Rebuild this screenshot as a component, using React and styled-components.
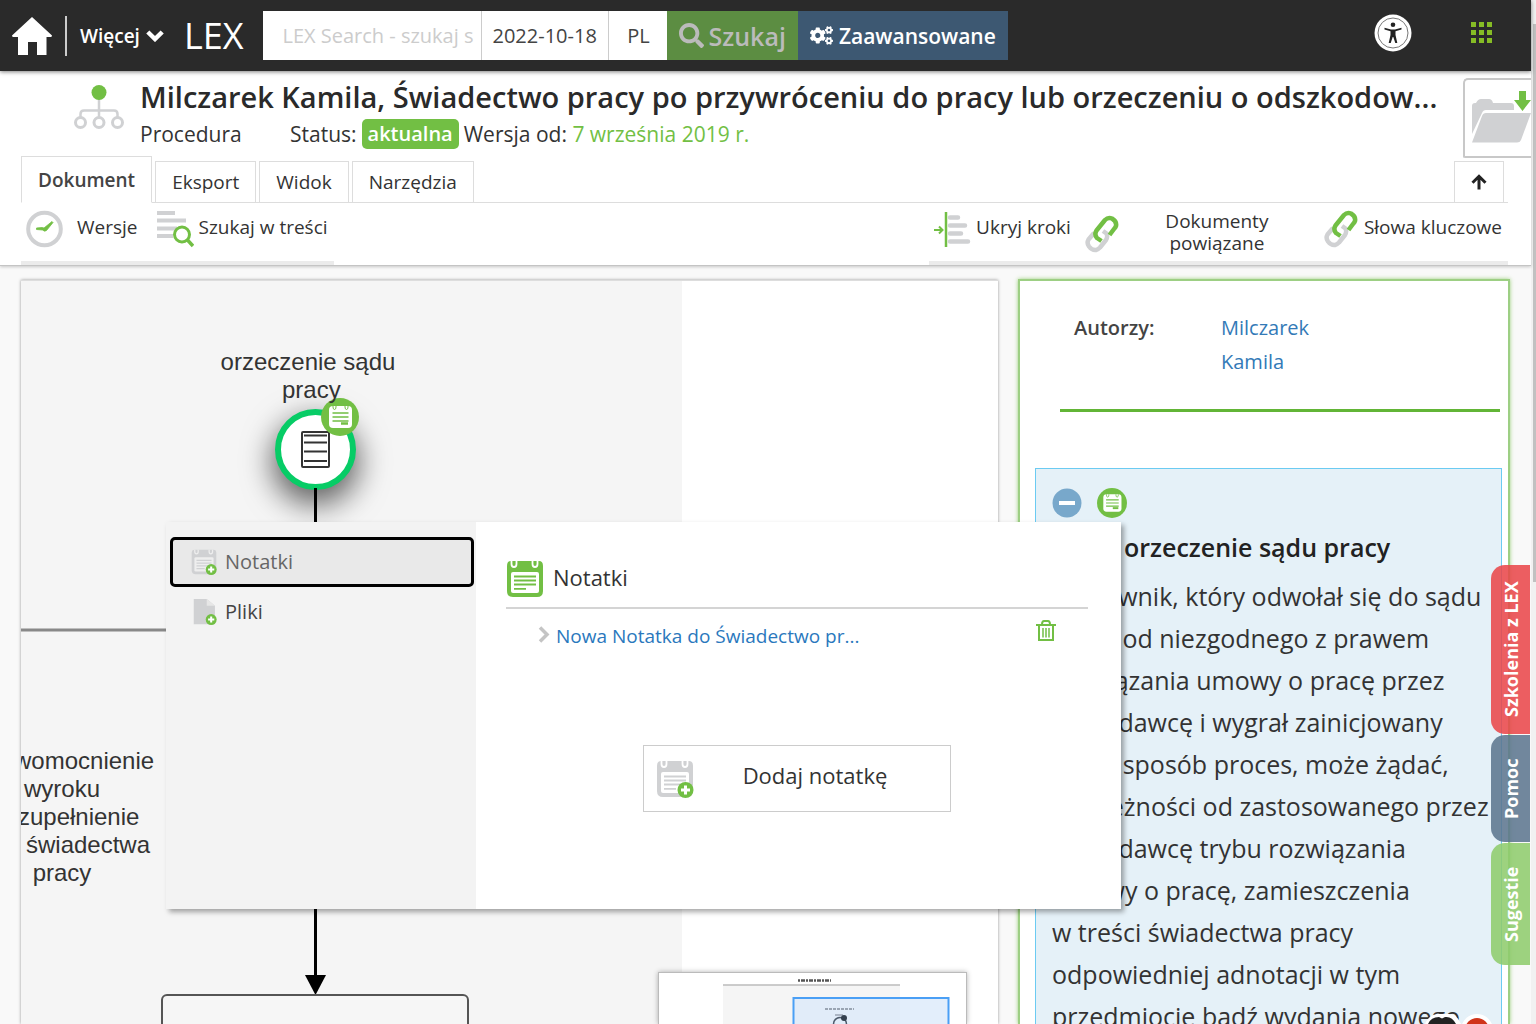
import React from "react";
import styled, { createGlobalStyle } from "styled-components";
import { FaSearch, FaCogs } from "react-icons/fa";

const GREEN = "#72bf44";
const GREY = "#d0d1d3";
const SANS = '"Open Sans", "Noto Sans", sans-serif';
const ARIAL = '"Liberation Sans", Arial, sans-serif';

const GlobalStyle = createGlobalStyle`
  *, *::before, *::after { box-sizing: border-box; }
  body { margin: 0; background: #f9f9f9; color: #333; font: 19px/24px ${SANS}; }
  button, input { font: inherit; color: inherit; }
  button { padding: 0; border: 0; background: none; cursor: pointer; }
  h1, h2, h3, p, ul, dl, dd { margin: 0; padding: 0; }
  ul { list-style: none; }
  a { color: #337ab7; text-decoration: none; }
  svg { display: block; flex: none; }
`;

/* ---------- page frame ---------- */

const Page = styled.div`
  display: flex;
  height: 100vh;
  overflow: hidden;
`;

const Content = styled.div`
  position: relative;
  display: flex;
  flex: 1;
  flex-direction: column;
  min-width: 0;
`;

const ScrollTrack = styled.div`
  flex: none;
  width: 5px;
  padding: 24px 0 0 2px;
  background: #f1f1f1;
`;

const ScrollThumb = styled.div`
  height: 558px;
  background: #c1c1c1;
`;

/* ---------- top bar ---------- */

const TopBar = styled.header`
  position: relative;
  z-index: 1;
  display: flex;
  flex: none;
  align-items: center;
  height: 71px;
  padding: 0 37px 0 12px;
  background: #2a2a2a;
  color: #fff;
  box-shadow: 0 1px 4px rgba(0, 0, 0, 0.5);
`;

const MoreButton = styled.button`
  display: flex;
  align-items: center;
  gap: 6px;
  height: 40px;
  margin-left: 13px;
  padding-left: 13px;
  border-left: 2px solid #ccc;
  font-size: 19px;
  font-weight: 600;
`;

const Brand = styled.a`
  margin: 0 20px;
  color: #fff;
  font-size: 36px;
  line-height: 48px;
`;

const SearchForm = styled.form`
  display: flex;
  height: 49px;
  background: #fff;
  color: #444;
`;

const SearchInput = styled.input`
  width: ${(p) => p.$width};
  padding: 0 0 0 ${(p) => p.$indent};
  border: 0;
  border-right: 1px solid #ccc;
  background: #fff;
  font-size: 20px;
  outline: 0;
  &::placeholder { color: #ccc; opacity: 1; }
`;

const LangButton = styled.button`
  width: 58px;
  font-size: 20px;
`;

const FormButton = styled.button`
  display: flex;
  align-items: center;
  justify-content: center;
  gap: ${(p) => (p.$primary ? "4px" : "6px")};
  padding: 0 12px;
  background: ${(p) => (p.$primary ? "#5c8d42" : "#3d5872")};
  color: ${(p) => (p.$primary ? "#bbb" : "#fff")};
  font-size: ${(p) => (p.$primary ? "25px" : "21px")};
  font-weight: 600;
`;

const TopActions = styled.div`
  display: flex;
  align-items: center;
  gap: 58px;
  margin: 0 0 6px auto;
`;

/* ---------- document header ---------- */

const DocHeader = styled.section`
  flex: none;
  background: #fff;
  border-bottom: 1px solid #c4c4c4;
  box-shadow: 0 1px 3px rgba(0, 0, 0, 0.2);
`;

const DocTop = styled.div`
  display: flex;
  height: 85px;
  padding-left: 74px;
`;

const DocIcon = styled.div`
  width: 66px;
  padding-top: 13px;
`;

const DocText = styled.div`
  flex: 1;
  min-width: 0;
  padding-top: 6px;
`;

const DocTitle = styled.h1`
  overflow: hidden;
  color: #2a2a2a;
  font-size: 29px;
  font-weight: 600;
  line-height: 40px;
  text-overflow: ellipsis;
  white-space: nowrap;
`;

const DocMeta = styled.div`
  display: flex;
  align-items: center;
  margin-top: 2px;
  font-size: 21px;
  line-height: 30px;
  white-space: pre;
`;

const DocType = styled.span`
  width: 150px;
`;

const StatusBadge = styled.span`
  margin: 0 5px;
  padding: 0 6px;
  border-radius: 5px;
  background: ${GREEN};
  color: #fff;
  font-size: 20px;
  font-weight: 600;
`;

const VersionDate = styled.span`
  color: ${GREEN};
`;

const FolderButton = styled.button`
  width: 68px;
  height: 80px;
  margin: 7px 0 0 10px;
  padding-left: 5px;
  border: 2px solid #c8c8c8;
  border-right: 0;
  border-radius: 5px 0 0 2px;
`;

const TabRow = styled.nav`
  display: flex;
  align-items: flex-end;
  gap: 3px;
  height: 47px;
  margin: 0 23px 0 21px;
  box-shadow: inset 0 -1px #ddd;
`;

const Tab = styled.button`
  height: ${(p) => (p.$active ? "47px" : "42px")};
  padding: 0 16px;
  border: 1px solid #ddd;
  border-bottom-color: ${(p) => (p.$active ? "#fff" : "#ddd")};
  background: #fff;
  font-size: 19px;
  font-weight: ${(p) => (p.$active ? 600 : 400)};
  color: ${(p) => (p.$active ? "#444" : "#333")};
`;

const CollapseTab = styled(Tab)`
  display: grid;
  place-items: center;
  width: 50px;
  margin: 0 4px 0 auto;
`;

const ToolRow = styled.div`
  display: flex;
  justify-content: space-between;
  margin: 0 23px 0 21px;
`;

const ToolGroup = styled.div`
  display: flex;
  align-items: flex-start;
  height: 62px;
  gap: ${(p) => p.$gap};
  padding: 7px 6px 0 5px;
  border-bottom: 4px solid #ebebeb;
`;

const Tool = styled.button`
  display: flex;
  align-items: center;
  gap: ${(p) => p.$gap};
  line-height: 22px;
`;

const ToolLabel = styled.span`
  width: ${(p) => (p.$narrow ? "167px" : "auto")};
  padding: ${(p) => (p.$narrow ? "0 37px 0 18px" : "0")};
  margin-bottom: 4px;
`;

/* ---------- work area ---------- */

const Main = styled.main`
  position: relative;
  display: grid;
  flex: 1;
  grid-template-columns: minmax(0, 1fr) 492px;
  gap: 20px;
  min-height: 0;
  padding: 14px 21px 0;
`;

const DiagramPanel = styled.section`
  position: relative;
  overflow: hidden;
  border-top: 1px solid #ddd;
  background: #fff;
  box-shadow: 0 0 3px rgba(0, 0, 0, 0.4);
`;

const Canvas = styled.div`
  position: relative;
  width: 661px;
  height: 100%;
  overflow: hidden;
  background: #f5f5f5;
`;

const NodeLabel = styled.p`
  position: absolute;
  left: ${(p) => p.$x}px;
  top: ${(p) => p.$y}px;
  width: 200px;
  color: #333;
  font: 24px/28px ${ARIAL};
  text-align: center;
  white-space: pre-line;
`;

const Wires = styled.svg`
  position: absolute;
  inset: 0;
`;

const StartNode = styled.div`
  position: absolute;
  left: 254px;
  top: 128px;
  display: grid;
  place-items: center;
  width: 81px;
  height: 81px;
  border: 6px solid #07cc66;
  border-radius: 50%;
  background: #fff;
  box-shadow: 0 12px 30px 3px rgba(0, 0, 0, 0.6);
`;

const NodeNote = styled.button`
  position: absolute;
  left: 300px;
  top: 117px;
`;

const StepNode = styled.div`
  position: absolute;
  left: 140px;
  top: 713px;
  width: 308px;
  height: 80px;
  border: 2px solid #555;
  border-radius: 6px;
  background: #f6f6f6;
`;

const MiniMap = styled.div`
  position: absolute;
  right: 31px;
  bottom: 0;
  width: 309px;
  height: 52px;
  border: 1px solid #bbb;
  border-bottom: 0;
  background: #fff;
  box-shadow: 0 0 5px rgba(0, 0, 0, 0.3);
`;

/* ---------- commentary panel ---------- */

const InfoPanel = styled.aside`
  overflow: hidden;
  margin-top: -1px;
  padding: 29px 6px 0 15px;
  border: 2px solid #9dcf84;
  border-bottom: 0;
  background: #fff;
  box-shadow: 0 0 4px rgba(114, 191, 68, 0.7);
`;

const Authors = styled.dl`
  display: grid;
  grid-template-columns: 147px 120px;
  height: 102px;
  margin: 0 2px 56px 25px;
  padding: 1px 14px 0;
  border-bottom: 3px solid #62b536;
  font-size: 20px;
  line-height: 34px;
`;

const AuthorsTerm = styled.dt`
  color: #444;
  font-weight: 600;
`;

const StepBox = styled.article`
  padding: 19px 0 0 16px;
  border: 1px solid #6bcbf2;
  background: #e5f1f8;
`;

const StepActions = styled.div`
  display: flex;
  gap: 15px;
`;

const StepTitle = styled.h2`
  padding: 12px 0 11px 72px;
  color: #222;
  font-size: 25px;
  font-weight: 600;
  line-height: 34px;
`;

const StepText = styled.p`
  font-size: 25px;
  line-height: 42px;
  white-space: pre;
`;

/* ---------- notes popup ---------- */

const Popup = styled.section`
  position: absolute;
  left: 166px;
  top: 256px;
  display: flex;
  width: 955px;
  height: 387px;
  background: #fff;
  box-shadow: 3px 3px 5px rgba(0, 0, 0, 0.35);
`;

const PopupMenu = styled.nav`
  width: 310px;
  padding: 15px 2px 0 4px;
  background: #f3f3f3;
`;

const MenuItem = styled.button`
  display: flex;
  align-items: center;
  gap: 8px;
  width: 100%;
  height: 50px;
  padding-left: 18px;
  border: 3px solid ${(p) => (p.$active ? "#000" : "transparent")};
  border-radius: 5px;
  background: ${(p) => (p.$active ? "#e9e9e9" : "none")};
  color: ${(p) => (p.$active ? "#666" : "#444")};
  font-size: 20px;
`;

const PopupBody = styled.div`
  display: flex;
  flex: 1;
  flex-direction: column;
  padding: 38px 33px 0 30px;
`;

const PopupHeading = styled.h3`
  display: flex;
  gap: 9px;
  height: 49px;
  border-bottom: 2px solid #d4d4d4;
  font-size: 22px;
  font-weight: 400;
  line-height: 34px;
`;

const NoteRow = styled.div`
  display: flex;
  align-items: flex-start;
  padding: 11px 32px;
`;

const NoteChevron = styled.span`
  padding-top: 6px;
`;

const NoteLink = styled.a`
  flex: 1;
  padding: 4px 0 0 6px;
  color: #2a78bd;
`;

const IconButton = styled.button`
  display: block;
`;

const AddNote = styled.button`
  display: flex;
  align-items: center;
  align-self: center;
  width: 308px;
  height: 67px;
  margin-top: 86px;
  padding-left: 12px;
  border: 1px solid #ccc;
  background: #fff;
  font-size: 22px;
`;

const AddNoteLabel = styled.span`
  flex: 1;
  padding: 0 14px 7px 0;
`;

/* ---------- side tabs ---------- */

const SideTabs = styled.nav`
  position: absolute;
  top: 565px;
  right: 1px;
  display: flex;
  flex-direction: column;
  gap: 1px;
`;

const SideTab = styled.button`
  width: 39px;
  height: ${(p) => p.$height};
  border-radius: 0 14px 14px 0;
  background: ${(p) => p.$color};
  color: #fff;
  font-size: 18px;
  font-weight: 700;
  writing-mode: vertical-rl;
  transform: rotate(180deg);
`;

const ChatBubble = styled.button`
  position: absolute;
  right: 36px;
  bottom: 0;
`;

/* ---------- drawings ---------- */

const HomeIcon = () => (
  <svg width="40" height="40" viewBox="0 0 40 40" fill="#fff">
    <path d="M20 1 40 19.500Q40 21 38.500 21H34.500V39H25V26H16V39H6V21H1.500Q0 21 0 19.500Z" />
  </svg>
);

const Chevron = ({ size, color, right }) => (
  <svg width={right ? 12 : size} height={right ? 17 : 12} viewBox={right ? "0 0 12 17" : "0 0 18 12"} fill="none" stroke={color} strokeWidth={right ? 3.5 : 4.5}>
    <path d={right ? "M2 1.500 9 8.500 2 15.500" : "M1.800 2 9 9 16.200 2"} />
  </svg>
);

const AccessibilityIcon = () => (
  <svg width="38" height="38" viewBox="0 0 38 38">
    <circle cx="19" cy="19" r="18.500" fill="#fff" />
    <circle cx="19" cy="19" r="15" fill="none" stroke="#777" strokeWidth="1" />
    <circle cx="19" cy="10.800" r="2.300" fill="#222" />
    <path d="M10.500 13.800 17 15.500H21L27.500 13.800V15.500L21.500 17.200V21L23.300 29H21.300L19.300 23H18.700L16.700 29H14.700L16.500 21V17.200L10.500 15.500Z" fill="#222" />
  </svg>
);

const GridIcon = () => (
  <svg width="24" height="24" viewBox="0 0 24 24" fill="#86bc25">
    {[1, 9, 17].map((y) => [1, 9, 17].map((x) => <rect key={`${x}-${y}`} x={x} y={y} width="5" height="5" />))}
  </svg>
);

const ProcedureIcon = () => (
  <svg width="50" height="46" viewBox="0 0 50 46" fill="none" stroke={GREY} strokeWidth="3">
    <path d="M25 14V33M6.500 33V30Q6.500 26.500 10 26.500H40Q43.500 26.500 43.500 30V33" strokeWidth="2.500" />
    <circle cx="6.500" cy="38.500" r="5" fill="#fff" />
    <circle cx="25" cy="38.500" r="5" fill="#fff" />
    <circle cx="43.500" cy="38.500" r="5" fill="#fff" />
    <circle cx="25" cy="8.500" r="7.500" fill={GREEN} stroke="none" />
  </svg>
);

const FolderIcon = () => (
  <svg width="62" height="64" viewBox="0 -10 62 64">
    <path d="M2 38V10Q2 7 5 7H6Q8 3 11 3H19Q22 3 23 7H41Q44 7 44 10V14H16Q13 14 12 17Z" fill={GREY} />
    <path d="M16 17H61L51 44Q50 46.500 47 46.500H2L12 20Q13 17 16 17Z" fill={GREY} />
    <path d="M49-5H56V4H61L52.500 15 44 4H49Z" fill={GREEN} />
  </svg>
);

const ArrowUp = () => (
  <svg width="16" height="16" viewBox="0 0 16 16" fill="none" stroke="#222" strokeWidth="3">
    <path d="M8 15.500V3M1.500 8.800 8 2.300 14.500 8.800" />
  </svg>
);

const ClockIcon = () => (
  <svg width="37" height="38" viewBox="0 0 37 38">
    <circle cx="18.500" cy="19" r="16.300" fill="none" stroke={GREY} strokeWidth="4" />
    <path d="M10.500 18 16 17.500 18 18 26 11.500 27 12.500 20.500 20.500Q18.500 22 16.500 20L10.500 19.500Z" fill={GREEN} stroke={GREEN} strokeWidth="0.800" />
  </svg>
);

const SearchTextIcon = () => (
  <svg width="37" height="38" viewBox="0 0 37 38" fill="none">
    <path d="M0 3H18M0 10.500H29M0 18.500H20M0 26H16" stroke={GREY} strokeWidth="4" />
    <circle cx="25" cy="24.500" r="7.500" stroke={GREEN} strokeWidth="3" />
    <path d="M30.500 30 36 36" stroke={GREEN} strokeWidth="3.500" />
  </svg>
);

const StepsIcon = () => (
  <svg width="37" height="38" viewBox="0 0 37 38" fill="none">
    <path d="M0 20H8M5 16.500 8.500 20 5 23.500" stroke={GREEN} strokeWidth="2" />
    <path d="M12 2V37" stroke={GREEN} strokeWidth="2.500" />
    <path d="M16 7.500H24M16 15.500H31M16 23.500H27M16 31.500H34" stroke={GREY} strokeWidth="4.500" strokeLinecap="round" />
  </svg>
);

const LinkIcon = () => (
  <svg width="34" height="38" viewBox="0 0 34 38" fill="none" strokeWidth="4.500" strokeLinecap="butt" strokeLinejoin="round">
    <path d="M9 18 3.500 24.500Q1.500 28 4 31.500 7 35.500 11 35 13 34.500 15 32.500L21 25Q23 21.500 21.500 18.500L18 16" stroke={GREY} />
    <path d="M16.500 26 12 23Q9 19.500 11.500 15.500L20 5Q23 2 27 3.500 32 6.500 31 11 30.500 12.500 29 14L24.500 20" stroke={GREEN} />
  </svg>
);

const PlusMark = () => (
  <g>
    <circle cx="29.500" cy="30" r="8" fill={GREEN} />
    <path d="M29.500 25.500V34.500M25 30H34" stroke="#fff" strokeWidth="3" />
  </g>
);

const CalendarIcon = ({ size, color, plus, paper = "#fff" }) => (
  <svg width={size} height={size} viewBox="0 0 38 38">
    <path d="M5 1H33Q37 1 37 6V31Q37 37 31 37H7Q1 37 1 31V6Q1 1 5 1Z" fill={color} />
    <path d="M5.500 1V4Q5.500 7 8 7T10.500 4V1M26.500 1V4Q26.500 7 29 7T31.500 4V1" fill="none" stroke={paper} strokeWidth="1.800" />
    <rect x="5" y="12" width="28" height="21" rx="2" fill={paper} />
    <path d="M8 16.500H30M8 20.500H30M8 24.500H30M8 28.800H20" stroke={color} strokeWidth="1.800" />
    {plus && <PlusMark />}
  </svg>
);

const FileIcon = () => (
  <svg width="26" height="26" viewBox="0 0 38 38">
    <path d="M4 0H23L35 10V37H4Z" fill={GREY} />
    <path d="M23 0V10H35Z" fill="#e6e6e6" />
    <PlusMark />
  </svg>
);

const NoteBadge = ({ size }) => (
  <svg width={size} height={size} viewBox="0 0 38 38">
    <circle cx="19" cy="19" r="19" fill={GREEN} />
    <rect x="8" y="8" width="23" height="22" rx="4" fill="#fff" />
    <path d="M12 8V9Q12 11.500 13.500 11.500T15 9V8M24 8V9Q24 11.500 25.500 11.500T27 9V8" fill="none" stroke={GREEN} strokeWidth="1" />
    <path d="M11.500 15H27.500M11.500 19H27.500M11.500 23H27.500" stroke={GREEN} strokeWidth="1.500" />
    <path d="M20 25.500H27" stroke={GREEN} strokeWidth="2.500" />
  </svg>
);

const CollapseIcon = () => (
  <svg width="30" height="30" viewBox="0 0 30 30">
    <circle cx="15" cy="15" r="14.500" fill="#78a8cb" />
    <rect x="7" y="13" width="16" height="4" fill="#fff" />
  </svg>
);

const TrashIcon = () => (
  <svg width="20" height="22" viewBox="0 0 20 22" fill="none" stroke={GREEN} strokeWidth="2">
    <path d="M0 5H20M3 5V20H17V5M6 4.500Q6 1 8 1H12Q14 1 14 4.500" />
    <path d="M7 8V17.500M10 8V17.500M13 8V17.500" strokeWidth="1.500" />
  </svg>
);

const DocumentIcon = () => (
  <svg width="29" height="37" viewBox="0 0 29 37" fill="none" stroke="#333">
    <rect x="1" y="1" width="27" height="35" rx="1" strokeWidth="2" />
    <path d="M3 4.500H26M3 11.500H26M3 20.500H26M3 30H26" strokeWidth="1.800" />
  </svg>
);

const MiniDiagram = () => (
  <svg width="307" height="51" viewBox="0 0 307 51">
    <rect x="64" y="12" width="177" height="39" fill="#f5f5f5" />
    <path d="M64 12H241" stroke="#bbb" strokeWidth="1.500" />
    <path d="M139 7.500H172" stroke="#555" strokeWidth="2.500" strokeDasharray="2 1 4 1" />
    <rect x="134.500" y="25" width="155" height="40" fill="#dceafa" fillOpacity="0.8" stroke="#4a9ff5" strokeWidth="2" />
    <path d="M166 36H195" stroke="#9aa5b3" strokeWidth="2" strokeDasharray="3 1" />
    <path d="M176 42H184" stroke="#9aa5b3" strokeWidth="1.500" />
    <circle cx="181" cy="51" r="6.500" fill="none" stroke="#4c5a6b" strokeWidth="1.500" />
    <circle cx="185" cy="45" r="3" fill="#33404f" />
  </svg>
);

const ChatIcon = () => (
  <svg width="72" height="12" viewBox="0 0 72 12">
    <path d="M2 12Q6 2 16 2H26Q34 2 38 12Z" fill="#fff" />
    <path d="M5 12Q8 5 16 5L19 6.500 22 5Q29 4 33 12Z" fill="#222" />
    <circle cx="54" cy="18" r="16" fill="#fff" />
    <circle cx="54" cy="18" r="12" fill="#d0341a" />
  </svg>
);

/* ---------- data ---------- */

const tabs = ["Dokument", "Eksport", "Widok", "Narzędzia"];

const stepLines = [
  "Pracownik, który odwołał się do sądu",
  "pracy od niezgodnego z prawem",
  "rozwiązania umowy o pracę przez",
  "pracodawcę i wygrał zainicjowany",
  "w ten sposób proces, może żądać,",
  "w zależności od zastosowanego przez",
  "pracodawcę trybu rozwiązania",
  "umowy o pracę, zamieszczenia",
  "w treści świadectwa pracy",
  "odpowiedniej adnotacji w tym",
  "przedmiocie bądź wydania nowego",
];

const sideTabs = [
  { label: "Szkolenia z LEX", height: "169px", color: "rgba(233, 70, 74, 0.87)" },
  { label: "Pomoc", height: "107px", color: "rgba(92, 117, 143, 0.87)" },
  { label: "Sugestie", height: "122px", color: "rgba(142, 203, 108, 0.87)" },
];

export default function App() {
  return (
    <Page>
      <GlobalStyle />
      <Content>
        <TopBar>
          <IconButton aria-label="Strona główna"><HomeIcon /></IconButton>
          <MoreButton>Więcej <Chevron size={18} color="#fff" /></MoreButton>
          <Brand href="#">LEX</Brand>
          <SearchForm onSubmit={(e) => e.preventDefault()}>
            <SearchInput aria-label="Szukaj" placeholder="LEX Search - szukaj s" $width="219px" $indent="19px" />
            <SearchInput aria-label="Data" defaultValue="2022-10-18" $width="127px" $indent="10px" />
            <LangButton type="button">PL</LangButton>
            <FormButton $primary><FaSearch size={25} />Szukaj</FormButton>
            <FormButton type="button"><FaCogs size={23} />Zaawansowane</FormButton>
          </SearchForm>
          <TopActions>
            <IconButton aria-label="Dostępność"><AccessibilityIcon /></IconButton>
            <IconButton aria-label="Aplikacje"><GridIcon /></IconButton>
          </TopActions>
        </TopBar>

        <DocHeader>
          <DocTop>
            <DocIcon><ProcedureIcon /></DocIcon>
            <DocText>
              <DocTitle>Milczarek Kamila, Świadectwo pracy po przywróceniu do pracy lub orzeczeniu o odszkodow...</DocTitle>
              <DocMeta>
                <DocType>Procedura</DocType>
                <span>Status:</span>
                <StatusBadge>aktualna</StatusBadge>
                <span>Wersja od: </span>
                <VersionDate>7 września 2019 r.</VersionDate>
              </DocMeta>
            </DocText>
            <FolderButton aria-label="Dodaj do teczki"><FolderIcon /></FolderButton>
          </DocTop>
          <TabRow>
            {tabs.map((label, i) => <Tab key={label} $active={i === 0}>{label}</Tab>)}
            <CollapseTab aria-label="Zwiń"><ArrowUp /></CollapseTab>
          </TabRow>
          <ToolRow>
            <ToolGroup $gap="19px">
              <Tool $gap="14px"><ClockIcon /><ToolLabel>Wersje</ToolLabel></Tool>
              <Tool $gap="5px"><SearchTextIcon /><ToolLabel>Szukaj w treści</ToolLabel></Tool>
            </ToolGroup>
            <ToolGroup $gap="14px">
              <Tool $gap="5px"><StepsIcon /><ToolLabel>Ukryj kroki</ToolLabel></Tool>
              <Tool $gap="24px"><LinkIcon /><ToolLabel $narrow>Dokumenty powiązane</ToolLabel></Tool>
              <Tool $gap="6px"><LinkIcon /><ToolLabel>Słowa kluczowe</ToolLabel></Tool>
            </ToolGroup>
          </ToolRow>
        </DocHeader>

        <Main>
          <DiagramPanel>
            <Canvas>
              <StartNode><DocumentIcon /></StartNode>
              <Wires width="661" height="744" fill="none">
                <path d="M294.500 207V700" stroke="#000" strokeWidth="3" />
                <path d="M284 694H305L294.500 714Z" fill="#000" />
                <path d="M0 349H280" stroke="#888" strokeWidth="3" />
              </Wires>
              <StepNode />
              <NodeNote aria-label="Notatka"><NoteBadge size={38} /></NodeNote>
              <NodeLabel $x={187} $y={67}>{"orzeczenie sądu\n\u00a0pracy"}</NodeLabel>
              <NodeLabel $x={-59} $y={466}>{"Uprawomocnienie\u00a0\u00a0\nwyroku\no uzupełnienie\njego świadectwa\npracy"}</NodeLabel>
            </Canvas>
            <MiniMap><MiniDiagram /></MiniMap>
          </DiagramPanel>

          <InfoPanel>
            <Authors>
              <AuthorsTerm>Autorzy:</AuthorsTerm>
              <dd><a href="#">Milczarek Kamila</a></dd>
            </Authors>
            <StepBox>
              <StepActions>
                <IconButton aria-label="Zwiń krok"><CollapseIcon /></IconButton>
                <IconButton aria-label="Notatka do kroku"><NoteBadge size={30} /></IconButton>
              </StepActions>
              <StepTitle>orzeczenie sądu pracy</StepTitle>
              <StepText>{stepLines.join("\n")}</StepText>
            </StepBox>
          </InfoPanel>

          <Popup>
            <PopupMenu>
              <MenuItem $active><CalendarIcon size={26} color={GREY} paper="#eee" plus />Notatki</MenuItem>
              <MenuItem><FileIcon />Pliki</MenuItem>
            </PopupMenu>
            <PopupBody>
              <PopupHeading><CalendarIcon size={38} color={GREEN} />Notatki</PopupHeading>
              <NoteRow>
                <NoteChevron><Chevron right color="#c4c4c4" /></NoteChevron>
                <NoteLink href="#">Nowa Notatka do Świadectwo pr...</NoteLink>
                <IconButton aria-label="Usuń notatkę"><TrashIcon /></IconButton>
              </NoteRow>
              <AddNote>
                <CalendarIcon size={38} color={GREY} plus />
                <AddNoteLabel>Dodaj notatkę</AddNoteLabel>
              </AddNote>
            </PopupBody>
          </Popup>
        </Main>

        <SideTabs>
          {sideTabs.map((t) => <SideTab key={t.label} $height={t.height} $color={t.color}>{t.label}</SideTab>)}
        </SideTabs>
        <ChatBubble aria-label="Czat"><ChatIcon /></ChatBubble>
      </Content>
      <ScrollTrack><ScrollThumb /></ScrollTrack>
    </Page>
  );
}
